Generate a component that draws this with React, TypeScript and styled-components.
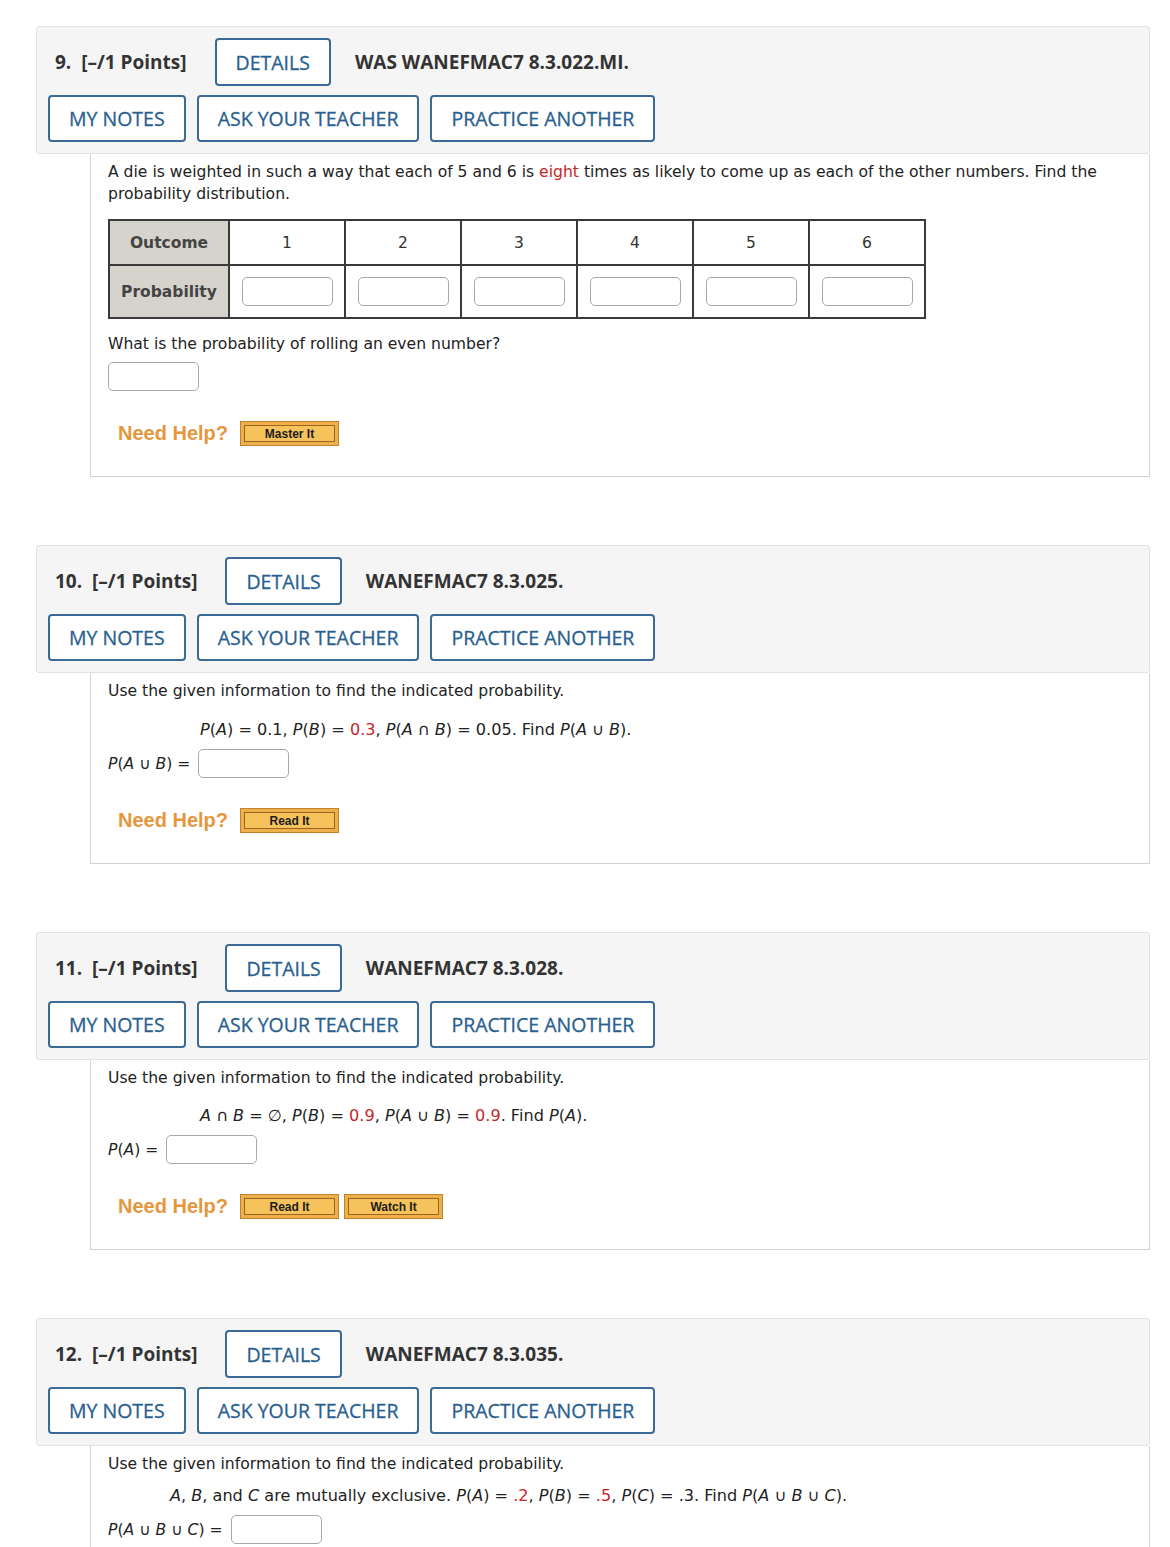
import React from "react";
import styled, { createGlobalStyle } from "styled-components";

const GlobalStyle = createGlobalStyle`
  body {
    margin: 0;
    background: #ffffff;
    font-family: "DejaVu Sans", Verdana, sans-serif;
    color: #222;
  }
`;

const Page = styled.div`
  padding: 26px 20px 0 36px;
  display: flex;
  flex-direction: column;
  gap: 68px;
`;

const Question = styled.section`
  width: 1114px;
`;

const Header = styled.div`
  background: #f5f5f5;
  border: 1px solid #e2e2e2;
  border-radius: 3px;
  padding: 11px 12px 11px 11px;
  display: flex;
  flex-direction: column;
  gap: 9px;
  font-family: "Open Sans", sans-serif;
`;

const HeadRow = styled.div`
  display: flex;
  align-items: center;
  gap: 11px;
`;

const Label = styled.span`
  font-size: 19px;
  font-weight: 700;
  color: #333;
  padding-left: 7px;
  margin-right: 17px;
  white-space: pre;
`;

const Code = styled.span`
  font-size: 19px;
  font-weight: 700;
  color: #333;
  margin-left: 13px;
`;

const OutlineButton = styled.button<{ $h?: number }>`
  font-family: "Open Sans", sans-serif;
  font-size: 19.5px;
  font-weight: 400;
  -webkit-text-stroke: 0.3px #2a5f8f;
  color: #2a5f8f;
  background: #fff;
  border: 2px solid #3a6a95;
  border-radius: 4px;
  height: ${(p) => p.$h ?? 47}px;
  padding: 0 19px;
`;

const Body = styled.div`
  margin-left: 54px;
  border: 1px solid #d4d4d4;
  border-top: none;
  padding: 7px 18px 30px 17px;
  display: flex;
  flex-direction: column;
  align-items: flex-start;
`;

const Text = styled.p`
  margin: 0;
  font-size: 15.6px;
  line-height: 22px;
  color: #222;
`;

const Red = styled.span`
  color: #c8252a;
`;

const I = styled.i`
  font-style: italic;
`;

const Formula = styled(Text)<{ $indent: number; $top: number }>`
  font-size: 16.1px;
  padding-left: ${(p) => p.$indent}px;
  margin-top: ${(p) => p.$top}px;
`;

const Table = styled.table`
  margin-top: 14px;
  border-collapse: collapse;
  font-size: 15.5px;
`;

const Th = styled.th<{ $h: number }>`
  background: #d6d3cc;
  color: #444;
  font-weight: bold;
  width: 118px;
  height: ${(p) => p.$h}px;
  border: 2px solid #3a3a3a;
  padding: 0;
`;

const Td = styled.td<{ $h: number }>`
  width: 114px;
  height: ${(p) => p.$h}px;
  border: 2px solid #3a3a3a;
  text-align: center;
  color: #333;
  font-weight: normal;
  padding: 0;
`;

const Input = styled.input`
  width: 91px;
  height: 29px;
  box-sizing: border-box;
  border: 1px solid #a8a8a8;
  border-radius: 5px;
  background: #fff;
  outline: none;
`;

const AnswerRow = styled.div<{ $top: number }>`
  margin-top: ${(p) => p.$top}px;
  display: flex;
  align-items: center;
  gap: 8px;
  font-size: 15.6px;
`;

const HelpRow = styled.div`
  margin-top: 30px;
  padding-left: 10px;
  display: flex;
  align-items: center;
`;

const NeedHelp = styled.span`
  font-family: "Liberation Sans", Arial, sans-serif;
  font-weight: bold;
  font-size: 20px;
  color: #e6963c;
  margin-right: 12px;
`;

const HelpButton = styled.span`
  display: flex;
  width: 99px;
  height: 25px;
  box-sizing: border-box;
  padding: 3px;
  margin-right: 5px;
  background: #efb04a;
  border: 1px solid #c3822e;
`;

const HelpInner = styled.span`
  flex: 1;
  display: flex;
  align-items: center;
  justify-content: center;
  border: 1px solid #9a6424;
  background: #f6c25c;
  font-family: "Liberation Sans", Arial, sans-serif;
  font-weight: bold;
  font-size: 12px;
  color: #1c1c1c;
`;

type HeadProps = { num: number; code: string };

const QuestionHeader = ({ num, code }: HeadProps) => (
  <Header>
    <HeadRow>
      <Label>{`${num}.  [–/1 Points]`}</Label>
      <OutlineButton $h={48}>DETAILS</OutlineButton>
      <Code>{code}</Code>
    </HeadRow>
    <HeadRow>
      <OutlineButton>MY NOTES</OutlineButton>
      <OutlineButton>ASK YOUR TEACHER</OutlineButton>
      <OutlineButton>PRACTICE ANOTHER</OutlineButton>
    </HeadRow>
  </Header>
);

const Help = ({ items }: { items: string[] }) => (
  <HelpRow>
    <NeedHelp>Need Help?</NeedHelp>
    {items.map((t) => (
      <HelpButton key={t}>
        <HelpInner>{t}</HelpInner>
      </HelpButton>
    ))}
  </HelpRow>
);

export default function App() {
  return (
    <>
      <GlobalStyle />
      <Page>
        <Question>
          <QuestionHeader num={9} code="WAS WANEFMAC7 8.3.022.MI." />
          <Body>
            <Text>
              A die is weighted in such a way that each of 5 and 6 is <Red>eight</Red> times as likely to come up as
              each of the other numbers. Find the probability distribution.
            </Text>
            <Table>
              <tbody>
                <tr>
                  <Th $h={43}>Outcome</Th>
                  {[1, 2, 3, 4, 5, 6].map((n) => (
                    <Td key={n} $h={43}>
                      {n}
                    </Td>
                  ))}
                </tr>
                <tr>
                  <Th $h={51}>Probability</Th>
                  {[1, 2, 3, 4, 5, 6].map((n) => (
                    <Td key={n} $h={51}>
                      <Input />
                    </Td>
                  ))}
                </tr>
              </tbody>
            </Table>
            <Text style={{ marginTop: 14 }}>What is the probability of rolling an even number?</Text>
            <AnswerRow $top={7}>
              <Input />
            </AnswerRow>
            <Help items={["Master It"]} />
          </Body>
        </Question>

        <Question>
          <QuestionHeader num={10} code="WANEFMAC7 8.3.025." />
          <Body>
            <Text>Use the given information to find the indicated probability.</Text>
            <Formula $indent={92} $top={17}>
              <I>P</I>(<I>A</I>) = 0.1, <I>P</I>(<I>B</I>) = <Red>0.3</Red>, <I>P</I>(<I>A</I> ∩ <I>B</I>) = 0.05.
              Find <I>P</I>(<I>A</I> ∪ <I>B</I>).
            </Formula>
            <AnswerRow $top={8}>
              <span>
                <I>P</I>(<I>A</I> ∪ <I>B</I>) =
              </span>
              <Input />
            </AnswerRow>
            <Help items={["Read It"]} />
          </Body>
        </Question>

        <Question>
          <QuestionHeader num={11} code="WANEFMAC7 8.3.028." />
          <Body>
            <Text>Use the given information to find the indicated probability.</Text>
            <Formula $indent={92} $top={16}>
              <I>A</I> ∩ <I>B</I> = ∅, <I>P</I>(<I>B</I>) = <Red>0.9</Red>, <I>P</I>(<I>A</I> ∪ <I>B</I>) ={" "}
              <Red>0.9</Red>. Find <I>P</I>(<I>A</I>).
            </Formula>
            <AnswerRow $top={8}>
              <span>
                <I>P</I>(<I>A</I>) =
              </span>
              <Input />
            </AnswerRow>
            <Help items={["Read It", "Watch It"]} />
          </Body>
        </Question>

        <Question>
          <QuestionHeader num={12} code="WANEFMAC7 8.3.035." />
          <Body>
            <Text>Use the given information to find the indicated probability.</Text>
            <Formula $indent={62} $top={10}>
              <I>A</I>, <I>B</I>, and <I>C</I> are mutually exclusive. <I>P</I>(<I>A</I>) = <Red>.2</Red>,{" "}
              <I>P</I>(<I>B</I>) = <Red>.5</Red>, <I>P</I>(<I>C</I>) = .3. Find <I>P</I>(<I>A</I> ∪ <I>B</I> ∪{" "}
              <I>C</I>).
            </Formula>
            <AnswerRow $top={8}>
              <span>
                <I>P</I>(<I>A</I> ∪ <I>B</I> ∪ <I>C</I>) =
              </span>
              <Input />
            </AnswerRow>
            <Help items={["Read It"]} />
          </Body>
        </Question>
      </Page>
    </>
  );
}
